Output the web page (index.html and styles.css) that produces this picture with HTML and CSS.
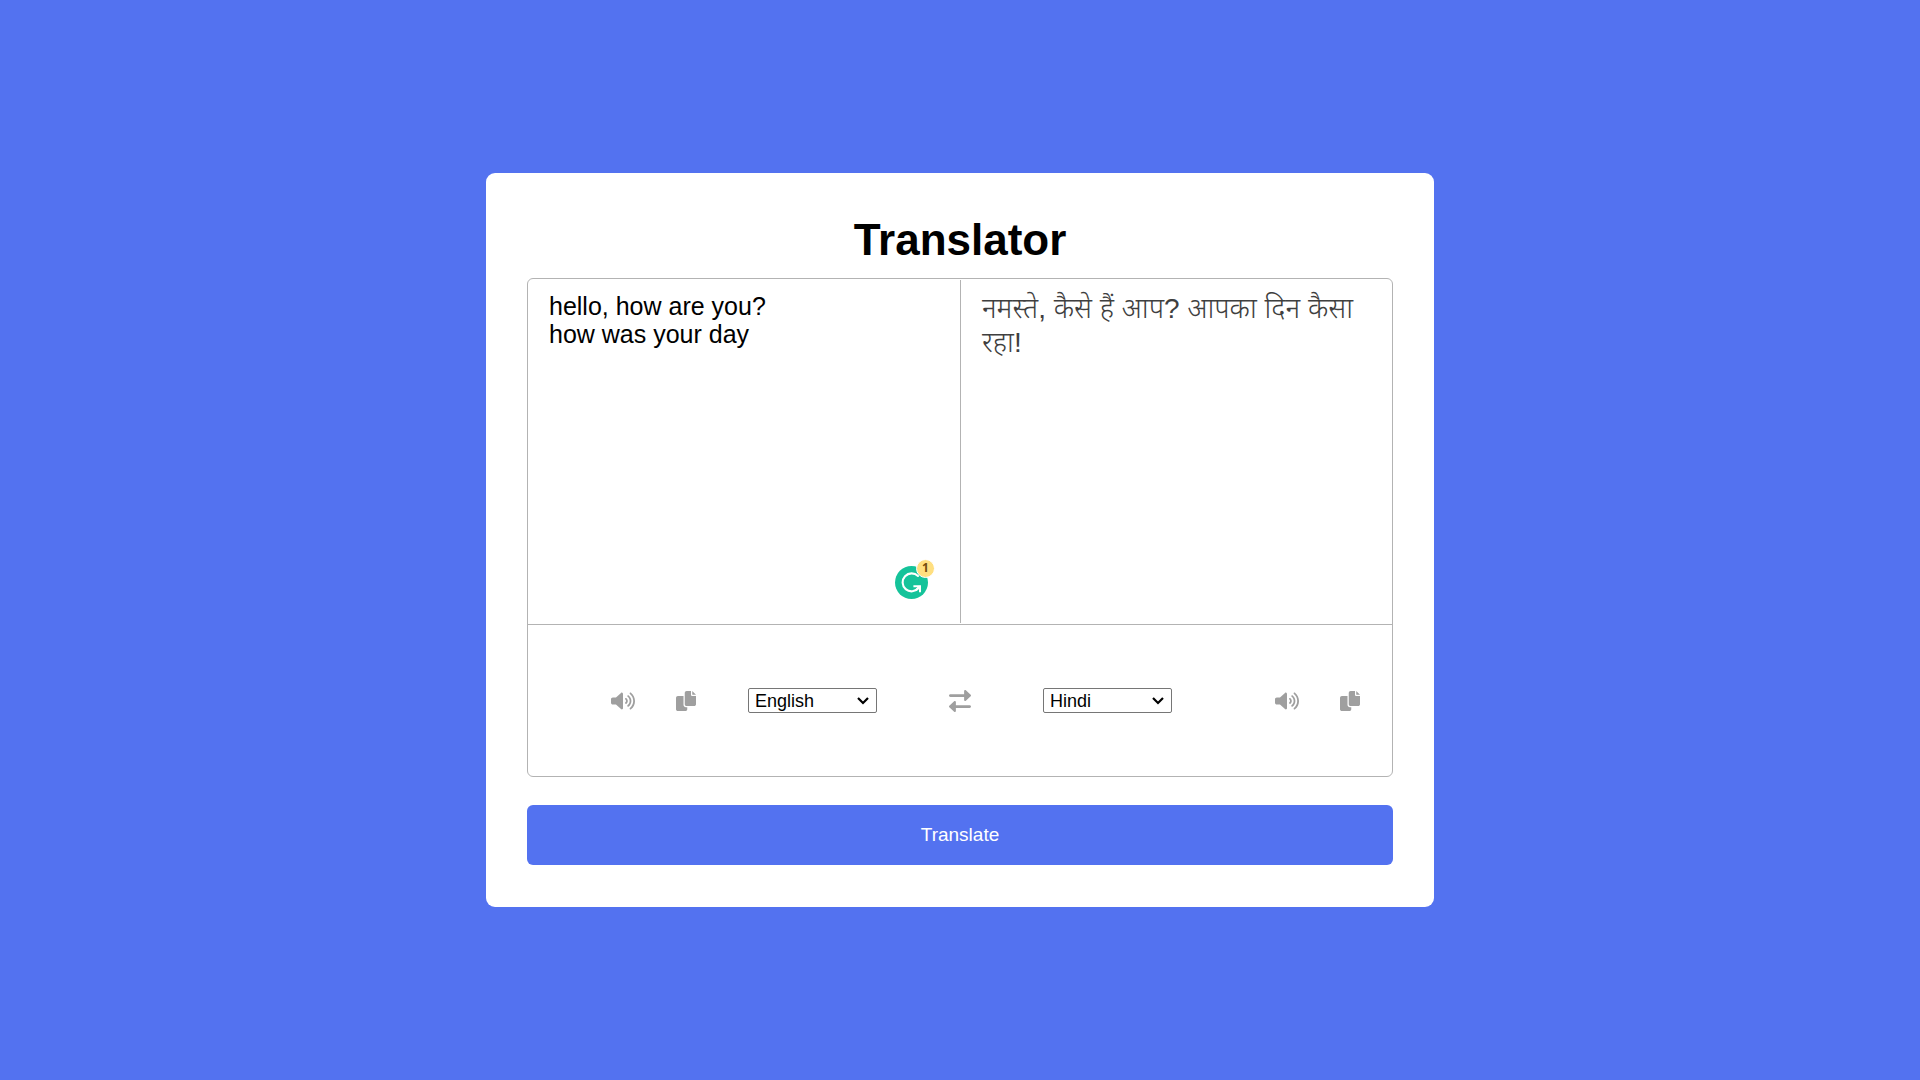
FILE: index.html
```html
<!DOCTYPE html>
<html lang="en">
<head>
<meta charset="utf-8">
<meta name="viewport" content="width=device-width, initial-scale=1">
<title>Translator</title>
<link rel="stylesheet" href="styles.css">
</head>
<body>
<svg class="sprite" aria-hidden="true">
  <symbol id="volume" viewBox="0 0 640 512"><path d="M412.6 182c-10.28-8.334-25.41-6.867-33.75 3.402c-8.406 10.24-6.906 25.35 3.375 33.74C393.5 228.4 400 241.8 400 255.1c0 14.17-6.5 27.59-17.81 36.83c-10.28 8.396-11.78 23.5-3.375 33.74c4.719 5.806 11.62 8.802 18.56 8.802c5.344 0 10.75-1.779 15.19-5.399C435.1 311.5 448 284.6 448 255.1S435.1 200.4 412.6 182zM473.1 108.2c-10.22-8.334-25.34-6.898-33.78 3.34c-8.406 10.24-6.906 25.35 3.344 33.74C476.6 172.1 496 213.3 496 255.1s-19.44 82.1-53.31 110.7c-10.25 8.396-11.75 23.5-3.344 33.74c4.75 5.775 11.62 8.771 18.56 8.771c5.375 0 10.75-1.779 15.22-5.431C518.2 366.9 544 313 544 255.1S518.2 145 473.1 108.2zM534.4 33.4c-10.22-8.334-25.34-6.867-33.78 3.34c-8.406 10.24-6.906 25.35 3.344 33.74C559.9 116.3 592 183.9 592 255.1s-32.09 139.7-88.06 185.5c-10.25 8.396-11.75 23.5-3.344 33.74C505.3 481 512.2 484 519.2 484c5.375 0 10.75-1.779 15.22-5.431C601.5 423.6 640 342.5 640 255.1S601.5 88.34 534.4 33.4zM301.2 34.98c-11.5-5.181-25.01-3.076-34.43 5.29L131.8 160.1H48c-26.51 0-48 21.48-48 47.96v95.92c0 26.48 21.49 47.96 48 47.96h83.84l134.9 119.8C272.7 477 280.3 479.8 288 479.8c4.438 0 8.959-.9314 13.16-2.835C312.7 471.8 320 460.4 320 447.9V64.12C320 51.55 312.7 40.13 301.2 34.98z"/></symbol>
  <symbol id="copy" viewBox="0 0 512 512"><path d="M384 96L384 0h-112c-26.51 0-48 21.49-48 48v288c0 26.51 21.49 48 48 48H464c26.51 0 48-21.49 48-48V128h-95.1C398.4 128 384 113.6 384 96zM416 0v96h96L416 0zM192 352V128h-144c-26.51 0-48 21.49-48 48v288c0 26.51 21.49 48 48 48h192c26.51 0 48-21.49 48-48L288 416h-32C220.7 416 192 387.3 192 352z"/></symbol>
  <symbol id="swap" viewBox="0 0 512 512"><path d="M32 160h319.9l.0791 72c0 9.547 5.652 18.19 14.41 22c8.754 3.812 18.93 2.078 25.93-4.406l112-104c10.24-9.5 10.24-25.69 0-35.19l-112-104c-6.992-6.484-17.17-8.217-25.93-4.408c-8.758 3.816-14.41 12.46-14.41 22L351.9 96H32C14.31 96 0 110.3 0 127.1S14.31 160 32 160zM480 352H160.1L160 279.1c0-9.547-5.652-18.19-14.41-22C136.9 254.2 126.7 255.9 119.7 262.4l-112 104c-10.24 9.5-10.24 25.69 0 35.19l112 104c6.992 6.484 17.17 8.219 25.93 4.406C154.4 506.2 160 497.5 160 488L160 416H480c17.69 0 32-14.31 32-32S497.7 352 480 352z"/></symbol>
</svg>
<main class="card">
  <h1 class="title">Translator</h1>
  <section class="wrapper">
    <div class="texts">
      <div class="pane">
        <textarea class="text" aria-label="Text to translate" spellcheck="false">hello, how are you?
how was your day</textarea>
        <button class="assistant" type="button" aria-label="Writing suggestions">
          <svg class="assistant-logo" viewBox="0 0 33 33" aria-hidden="true">
            <circle cx="16.5" cy="16.5" r="16.5" fill="#15c39a"/>
            <path d="M23 10A9 9 0 1 0 23.6 22" fill="none" stroke="#fff" stroke-width="2.1" stroke-linecap="round"/>
            <path d="M18.4 20.2H25V26.2" fill="none" stroke="#fff" stroke-width="2"/>
            <path d="M24.8 20.3L20.6 24.4" fill="none" stroke="#fff" stroke-width="2"/>
          </svg>
          <span class="assistant-count">1</span>
        </button>
      </div>
      <div class="pane pane-result">
        <textarea class="text text-result" aria-label="Translation" lang="hi" spellcheck="false" readonly>नमस्ते, कैसे हैं आप? आपका दिन कैसा रहा!</textarea>
      </div>
    </div>
    <div class="controls">
      <div class="side side-from">
        <div class="icons">
          <button class="icon-button" type="button" aria-label="Listen to text"><svg class="icon-volume"><use href="#volume"/></svg></button>
          <button class="icon-button" type="button" aria-label="Copy text"><svg class="icon-copy"><use href="#copy"/></svg></button>
        </div>
        <select class="language" aria-label="From language"><option>English</option><option>Hindi</option></select>
      </div>
      <button class="icon-button" type="button" aria-label="Swap languages"><svg class="icon-swap"><use href="#swap"/></svg></button>
      <div class="side side-to">
        <select class="language" aria-label="To language"><option>Hindi</option><option>English</option></select>
        <div class="icons">
          <button class="icon-button" type="button" aria-label="Listen to translation"><svg class="icon-volume"><use href="#volume"/></svg></button>
          <button class="icon-button" type="button" aria-label="Copy translation"><svg class="icon-copy"><use href="#copy"/></svg></button>
        </div>
      </div>
    </div>
  </section>
  <button class="translate" type="button">Translate</button>
</main>
</body>
</html>
```
FILE: styles.css
```css
* {
  box-sizing: border-box;
  margin: 0;
  padding: 0;
}

body {
  display: flex;
  align-items: center;
  justify-content: center;
  min-height: 100vh;
  background: #5372f0;
  font-family: Arial, "Liberation Sans", "Noto Sans Devanagari", "Noto Sans", sans-serif;
}

.sprite {
  position: absolute;
  width: 0;
  height: 0;
}

.card {
  width: 100%;
  max-width: 948px;
  padding: 41px 41px 42px;
  background: #fff;
  border-radius: 9px;
}

.title {
  margin-bottom: 12px;
  font-size: 44px;
  line-height: 52px;
  text-align: center;
}

.wrapper {
  border: 1px solid #b3b3b3;
  border-radius: 6px;
}

.texts {
  display: grid;
  grid-template-columns: 1fr 1fr;
  padding: 1px 0;
  border-bottom: 1px solid #b3b3b3;
}

.pane {
  position: relative;
  display: flex;
}

.pane-result {
  border-left: 1px solid #b3b3b3;
}

.text {
  width: 100%;
  min-height: 343px;
  padding: 12px 21px;
  border: 0;
  outline: 0;
  resize: none;
  background: none;
  color: #000;
  font: inherit;
  font-size: 25px;
  line-height: 28px;
}

.text-result {
  color: #3f3f3f;
  font-size: 28px;
  font-weight: 300;
  line-height: 34px;
}

.assistant {
  position: absolute;
  right: 32px;
  bottom: 24px;
  width: 33px;
  height: 33px;
  border: 0;
  background: none;
}

.assistant-logo {
  display: block;
  width: 33px;
  height: 33px;
}

.assistant-count {
  position: absolute;
  top: -7px;
  right: -7px;
  width: 19px;
  height: 19px;
  border: 1px solid #fff;
  border-radius: 50%;
  background: #ffdf80;
  color: #734c0e;
  font: bold 12px/16px "Open Sans", sans-serif;
}

.controls {
  display: grid;
  grid-template-columns: 1fr auto 1fr;
  align-items: center;
  gap: 72px;
  min-height: 151px;
  padding: 0 32px;
}

.side,
.icons {
  display: flex;
  align-items: center;
}

.side-from {
  justify-content: flex-end;
  gap: 52px;
}

.side-to {
  justify-content: space-between;
}

.icons {
  gap: 41px;
}

.icon-button {
  border: 0;
  background: none;
  color: #9f9f9f;
  cursor: pointer;
}

.icon-button svg {
  display: block;
  fill: currentColor;
}

.icon-volume {
  width: 24px;
  height: 20px;
}

.icon-copy {
  width: 20px;
  height: 20px;
}

.icon-swap {
  width: 22px;
  height: 22px;
}

.language {
  width: 129px;
  height: 25px;
  padding: 0 6px;
  border: 1px solid #767676;
  border-radius: 2px;
  appearance: none;
  background: #fff url("data:image/svg+xml,%3Csvg xmlns='http://www.w3.org/2000/svg' width='12' height='8' viewBox='0 0 12 8'%3E%3Cpath d='M1 1l5 5 5-5' fill='none' stroke='%23000' stroke-width='2.2'/%3E%3C/svg%3E") no-repeat right 7px center;
  color: #000;
  font: inherit;
  font-size: 18px;
}

.translate {
  display: block;
  width: 100%;
  height: 60px;
  margin-top: 28px;
  border: 0;
  border-radius: 6px;
  background: #5372f0;
  color: #fff;
  font: inherit;
  font-size: 19px;
  cursor: pointer;
}
```
